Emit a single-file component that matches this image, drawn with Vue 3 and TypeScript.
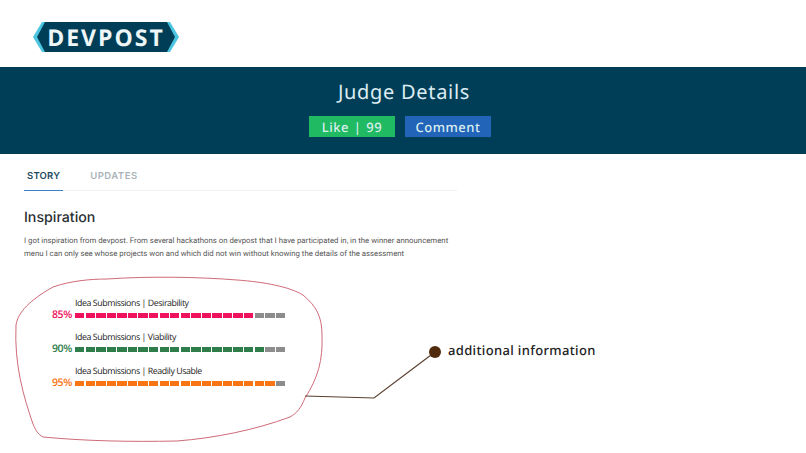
<script setup lang="ts">
interface Metric { label: string; pct: string; filled: number; color: string }
const metrics: Metric[] = [
  { label: 'Idea Submissions | Desirability', pct: '85%', filled: 17, color: '#f0125c' },
  { label: 'Idea Submissions | Viability', pct: '90%', filled: 18, color: '#2e7d4a' },
  { label: 'Idea Submissions | Readily Usable', pct: '95%', filled: 19, color: '#f97412' },
]
const segments = Array.from({ length: 20 }, (_, i) => i)
</script>

<template>
  <div class="page">
    <header class="top">
      <div class="logo">
        <svg class="logo-shape" width="146" height="30" viewBox="0 0 146 30">
          <polygon points="9,0 137,0 146,15 137,30 9,30 0,15" fill="#4cc5e0" />
          <polygon points="12,0 134,0 142,15 134,30 12,30 4,15" fill="#003e57" />
        </svg>
        <span class="logo-text">DEVPOST</span>
      </div>
    </header>

    <section class="band">
      <h1 class="title">Judge Details</h1>
      <div class="actions">
        <span class="btn like">Like&nbsp;|&nbsp;99</span>
        <span class="btn comment">Comment</span>
      </div>
    </section>

    <main class="story">
      <nav class="tabs">
        <span class="tab active">STORY</span>
        <span class="tab">UPDATES</span>
      </nav>
      <h2 class="heading">Inspiration</h2>
      <p class="body">
        I got inspiration from devpost. From several hackathons on devpost that I have participated in, in the winner announcement<br />
        menu I can only see whose projects won and which did not win without knowing the details of the assessment
      </p>
      <div class="metrics">
        <div v-for="m in metrics" :key="m.pct" class="metric">
          <div class="metric-label">{{ m.label }}</div>
          <div class="metric-row">
            <span class="metric-pct" :style="{ color: m.color }">{{ m.pct }}</span>
            <div class="bar">
              <i
                v-for="s in segments"
                :key="s"
                class="seg"
                :style="{ background: s < m.filled ? m.color : '#8c8c8c' }"
              ></i>
            </div>
          </div>
        </div>
      </div>
    </main>

    <svg class="annotation" width="806" height="453" viewBox="0 0 806 453">
      <path
        d="M16 325 C18 312 30 300 53 287 C70 281 90 279 107 279 C150 276 200 277 237 280 C265 282 290 287 303 295 C316 306 322 316 322 335 C323 360 318 378 305 398 C301 408 297 413 290 417 C255 430 215 438 177 441 C130 442 85 441 43 437 C38 434 36 431 33 424 C24 398 14 365 16 325 Z"
        fill="none"
        stroke="#cf6a78"
        stroke-width="1"
      />
      <polyline points="305,396 374,398 435,352" fill="none" stroke="#5a4030" stroke-width="1.2" />
      <circle cx="435" cy="352" r="6" fill="#4f2a0c" />
    </svg>
    <div class="note">additional information</div>
  </div>
</template>

<style>
html, body { margin: 0; background: #fff; }
</style>

<style scoped>
.page {
  position: relative;
  width: 806px;
  height: 453px;
  overflow: hidden;
  background: #fff;
  font-family: "Noto Sans", sans-serif;
  text-rendering: geometricPrecision;
}
.top {
  height: 67px;
  box-sizing: border-box;
  padding: 22px 0 0 33px;
}
.logo {
  position: relative;
  width: 146px;
  height: 30px;
  display: flex;
  align-items: center;
  justify-content: center;
}
.logo-shape {
  position: absolute;
  left: 0;
  top: 0;
}
.logo-text {
  position: relative;
  font-family: "Open Sans", sans-serif;
  font-weight: 700;
  font-size: 23px;
  line-height: 30px;
  letter-spacing: 2px;
  color: #eef6f8;
}
.band {
  height: 87px;
  background: #003e57;
  display: flex;
  flex-direction: column;
  align-items: center;
  box-sizing: border-box;
  padding-top: 11px;
}
.title {
  margin: 0 0 0 2px;
  font-size: 20px;
  line-height: 28px;
  font-weight: 400;
  letter-spacing: 0.7px;
  color: #dcecf2;
}
.actions {
  display: flex;
  gap: 10px;
  margin: 10px 6px 0 0;
}
.btn {
  width: 86px;
  height: 21px;
  display: flex;
  align-items: center;
  justify-content: center;
  font-size: 13px;
  font-weight: 500;
  letter-spacing: 0.5px;
  word-spacing: 1px;
  color: #dceef0;
}
.like { background: #20ba62; }
.comment { background: #2164b8; }
.story {
  width: 433px;
  padding-left: 24px;
}
.tabs {
  display: flex;
  gap: 30px;
  height: 37px;
  border-bottom: 1px solid #f1f3f4;
  box-sizing: border-box;
  padding-left: 3px;
  position: relative;
}
.tab {
  font-family: "Inter", sans-serif;
  font-size: 9.5px;
  font-weight: 600;
  letter-spacing: 0.5px;
  line-height: 46px;
  color: #a9b4ba;
}
.tab.active {
  color: #1f4a5e;
  letter-spacing: 0.2px;
  position: relative;
}
.tab.active::after {
  content: "";
  position: absolute;
  left: -3px;
  right: -3px;
  bottom: -1px;
  height: 1.5px;
  background: #3a7fc4;
}
.heading {
  margin: 17px 0 0;
  font-family: "Inter", sans-serif;
  font-size: 14.2px;
  line-height: 20px;
  font-weight: 500;
  color: #2a2f33;
}
.body {
  margin: 6px 0 0;
  font-family: "Roboto", sans-serif;
  font-size: 7.8px;
  line-height: 13px;
  color: #555;
  white-space: nowrap;
}
.metrics {
  margin: 37px 0 0 3px;
  display: flex;
  flex-direction: column;
  gap: 10px;
}
.metric-label {
  margin-left: 48px;
  font-family: "Open Sans", sans-serif;
  font-size: 8.8px;
  font-weight: 500;
  line-height: 12px;
  letter-spacing: -0.42px;
  color: #222;
}
.metric-row {
  display: flex;
  align-items: center;
  gap: 3px;
  height: 12px;
}
.metric-pct {
  width: 45px;
  text-align: right;
  font-family: "Open Sans", sans-serif;
  font-size: 10.5px;
  line-height: 12px;
  font-weight: 600;
  letter-spacing: -0.35px;
}
.bar {
  display: flex;
  gap: 1.2px;
  width: 210px;
}
.seg {
  flex: 1;
  height: 5px;
}
.annotation {
  position: absolute;
  left: 0;
  top: 0;
  pointer-events: none;
}
.note {
  position: absolute;
  left: 448px;
  top: 340px;
  font-size: 13px;
  font-weight: 500;
  line-height: 20px;
  letter-spacing: 0.35px;
  color: #222;
}
</style>
